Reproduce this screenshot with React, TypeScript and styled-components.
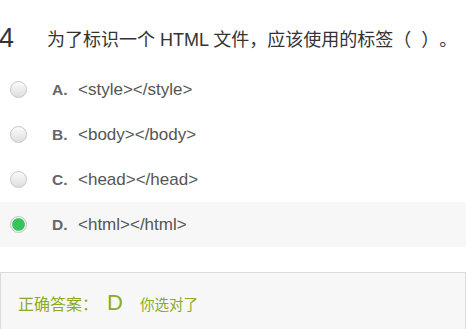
import React from "react";
import styled, { createGlobalStyle } from "styled-components";

const Global = createGlobalStyle`
  html, body { margin: 0; padding: 0; background: #fff; }
  body {
    font-family: "Liberation Sans", Arial, "Noto Sans CJK SC", sans-serif;
    text-spacing-trim: space-all;
    font-feature-settings: "chws" 0, "halt" 0, "palt" 0;
  }
`;

const Page = styled.div`
  width: 466px;
  display: flex;
  flex-direction: column;
`;

const Question = styled.div`
  display: flex;
  align-items: center;
  height: 67px;
  padding-top: 9px;
  box-sizing: border-box;
  color: #333;
`;

const Num = styled.span`
  font-size: 27px;
  width: 48px;
  flex: none;
  margin-left: -1px;
`;

const QText = styled.span`
  font-size: 18px;
  white-space: pre;
`;

const Options = styled.div`
  display: flex;
  flex-direction: column;
`;

const Row = styled.div<{ $active?: boolean }>`
  display: flex;
  align-items: center;
  height: 45px;
  padding-left: 10px;
  background: ${(p) => (p.$active ? "#f7f7f7" : "transparent")};
`;

const Radio = styled.span<{ $checked?: boolean }>`
  width: 17px;
  height: 17px;
  box-sizing: border-box;
  border-radius: 50%;
  border: 1px solid #c6c6c6;
  background: ${(p) =>
    p.$checked
      ? "radial-gradient(circle, #36c45b 0, #36c45b 5.8px, #f0f0f0 6.8px)"
      : "linear-gradient(#fbfbfb, #dedede)"};
  flex: none;
  margin-top: -1px;
`;

const Letter = styled.span`
  font-weight: bold;
  font-size: 15.5px;
  color: #666;
  margin-left: 25px;
  width: 26px;
`;

const OptText = styled.span`
  font-size: 17px;
  color: #555;
`;

const AnswerBox = styled.div`
  margin-top: 25px;
  height: 70px;
  border: 1px solid #dcdcdc;
  border-bottom: none;
  background: #f7f7f7;
  display: flex;
  align-items: center;
  padding-left: 17px;
  padding-bottom: 9px;
  box-sizing: border-box;
  color: #8aab22;
`;

const Label = styled.span`
  font-size: 16px;
  font-family: "Noto Sans CJK SC", sans-serif;
`;

const Key = styled.span`
  font-size: 22px;
  margin-left: 9px;
  margin-right: 17px;
`;

const Note = styled.span`
  font-size: 14.5px;
  font-family: "Noto Sans CJK SC", sans-serif;
`;

const opts = [
  { k: "A.", t: "<style></style>" },
  { k: "B.", t: "<body></body>" },
  { k: "C.", t: "<head></head>" },
  { k: "D.", t: "<html></html>" },
];

export default function App() {
  return (
    <Page>
      <Global />
      <Question>
        <Num>4</Num>
        <QText>为了标识一个 HTML 文件，应该使用的标签（  ）。</QText>
      </Question>
      <Options>
        {opts.map((o, i) => (
          <Row key={o.k} $active={i === 3}>
            <Radio $checked={i === 3} />
            <Letter>{o.k}</Letter>
            <OptText>{o.t}</OptText>
          </Row>
        ))}
      </Options>
      <AnswerBox>
        <Label>正确答案：</Label>
        <Key>D</Key>
        <Note>你选对了</Note>
      </AnswerBox>
    </Page>
  );
}
